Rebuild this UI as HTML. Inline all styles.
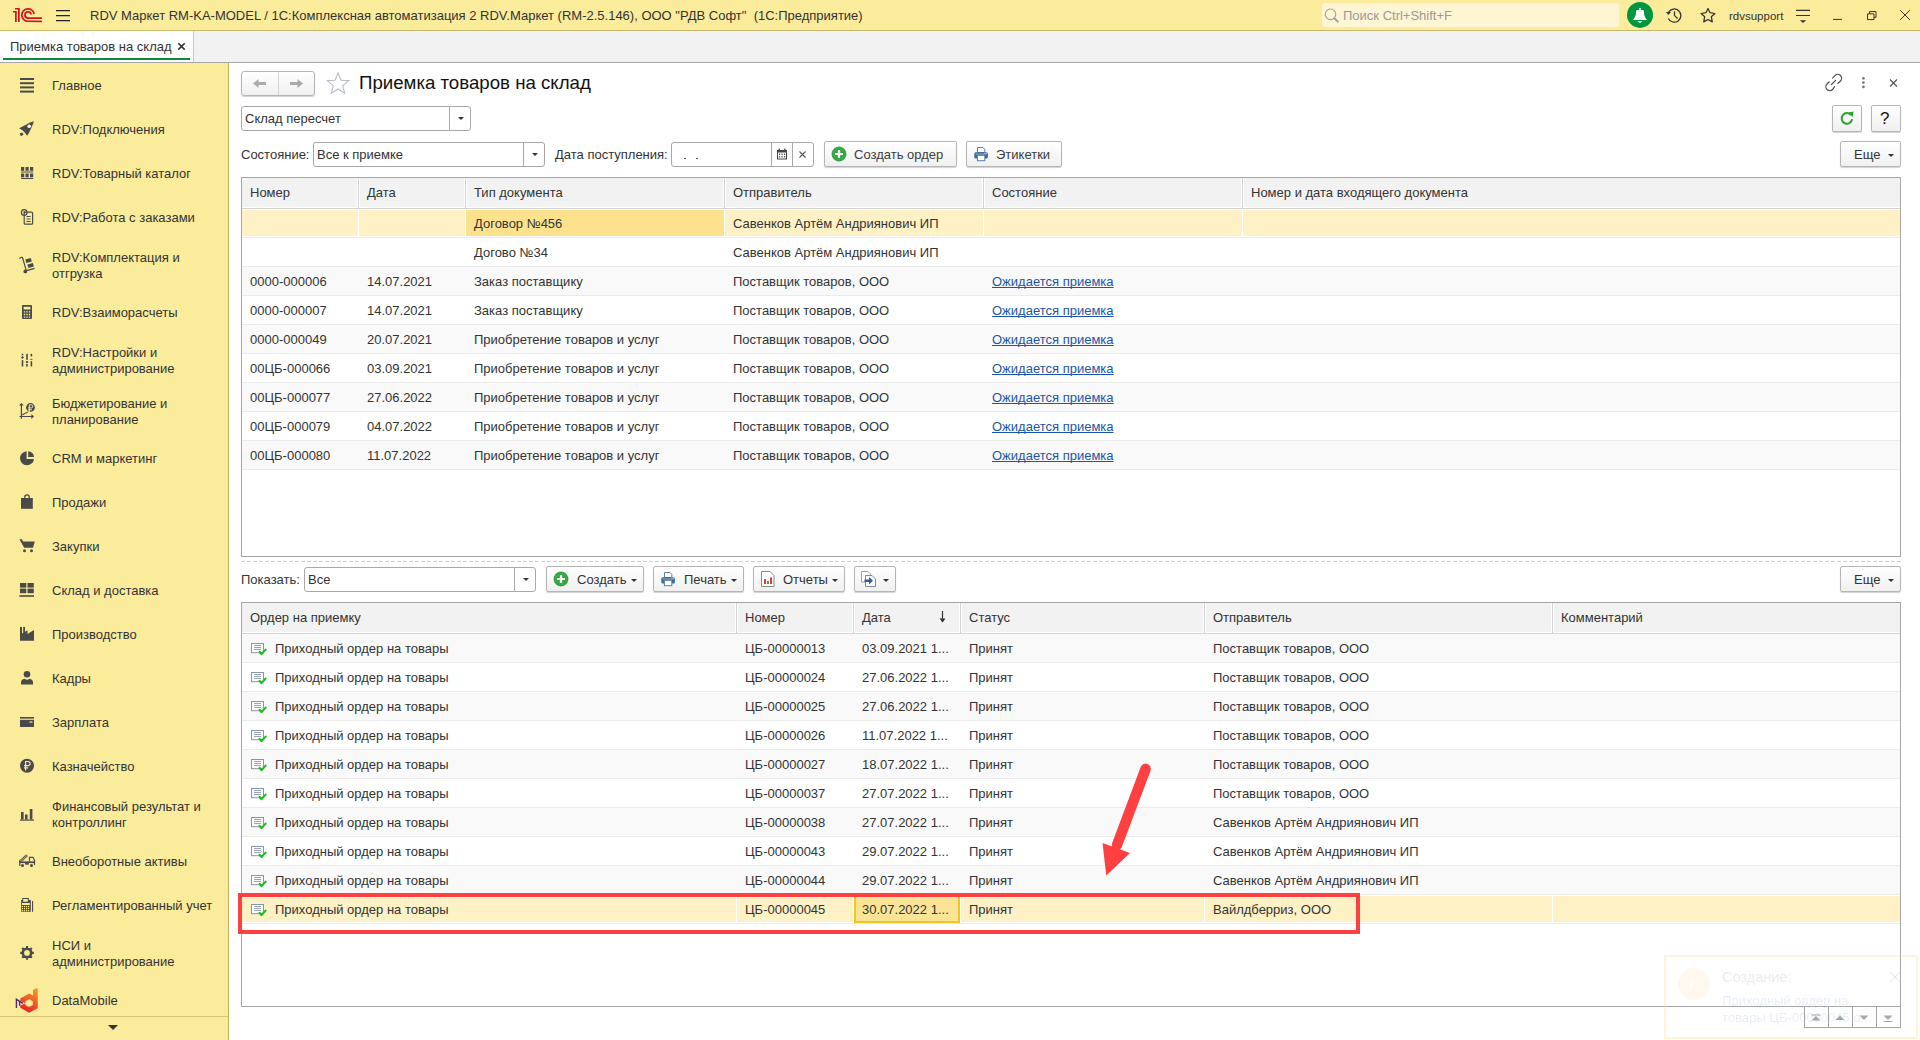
<!DOCTYPE html>
<html><head><meta charset="utf-8">
<style>
*{box-sizing:border-box;margin:0;padding:0}
html,body{width:1920px;height:1040px;overflow:hidden;background:#fff}
body{position:relative;font-family:"Liberation Sans",sans-serif;font-size:13px;color:#333}
.a{position:absolute}
.t{position:absolute;white-space:nowrap;line-height:16px}
#tb{left:0;top:0;width:1920px;height:31px;background:#fbec9c;border-bottom:1px solid #c9b96e}
#tabs{left:0;top:31px;width:1920px;height:32px;background:#f2f2f2;border-bottom:1px solid #a6a6a6}
#side{left:0;top:63px;width:229px;height:977px;background:#fbec9c;border-right:1px solid #bfae62}
.si{position:absolute;left:52px;line-height:16px;color:#333;white-space:nowrap}
.ic{position:absolute;left:19px}
.btn{position:absolute;border:1px solid #b5b5b5;border-radius:2px;background:linear-gradient(#fff,#f0f0f0);box-shadow:0 1px 1px rgba(0,0,0,.18)}
.inp{position:absolute;border:1px solid #a8a8a8;border-radius:3px;background:#fff}
.grid{position:absolute;border:1px solid #a0a0a0;background:#fff;overflow:hidden}
.hd{position:absolute;left:0;top:0;height:31px;background:#f2f2f2;border-bottom:1px solid #d6d6d6}
.row{position:absolute;left:0;height:29px;border-bottom:1px solid #e8e8e8}
.alt{background:#f9f9f9}
.cell{position:absolute;top:0;height:28px;line-height:28px;white-space:nowrap;overflow:hidden;color:#333}
.lnk{color:#2d5fa8;text-decoration:underline}
</style></head>
<body>
<!-- TITLE BAR -->
<div id="tb" class="a">
  <svg class="a" style="left:0;top:0" width="1920" height="31" viewBox="0 0 1920 31">
<g fill="#d7141e">
<path d="M18 8 H19.75 V22 H18 Z M15 8 H19.75 V9.6 H15 Z M15 11 H16.75 V22 H15 Z M13 11 H16.75 V12.6 H13 Z"/>
</g>
<g fill="none" stroke="#d7141e" stroke-width="1.75">
<path d="M34.15 14.1 A6.2 6.2 0 1 0 28 21.25 H41.9"/>
<path d="M31.1 14.5 A3.1 3.1 0 1 0 28 18.1 H41.9"/>
</g>
<g fill="none" stroke="#333" stroke-width="1.25">
<path d="M1668.3 18.4 A6.6 6.6 0 1 0 1668.6 12.2"/>
<path d="M1674.5 11.2 V15.6 L1677.6 18.5"/>
<path d="M1708 8.6 L1709.9 12.6 L1714.9 13.5 L1711.3 16.7 L1712.3 21.9 L1708 19.5 L1703.7 21.9 L1704.7 16.7 L1701.1 13.5 L1706.1 12.6 Z" stroke-linejoin="round"/>
<path d="M1796 10.4 H1810 M1796 15.5 H1810" stroke-width="1.1"/>
<path d="M1833 19.4 H1842" stroke-width="1"/>
<path d="M1867.5 13.8 H1874 V19.6 H1867.5 Z M1869.6 13.8 V11.5 H1876 V17.3 H1874" stroke-width="1"/>
<path d="M1900.2 10.2 L1909.9 19.9 M1909.9 10.2 L1900.2 19.9" stroke-width="1"/>
</g>
<path d="M1666 12.1 H1670.9 L1668.4 14.9 Z" fill="#333"/>
<path d="M1799.9 20.2 H1806.1 L1803 22.9 Z" fill="#333"/>
<circle cx="1640" cy="14.9" r="13" fill="#00963f"/>
<path d="M1639.2 7.9 H1640.8 V10.1 H1643 C1643.8 10.3 1643.9 11 1644 12.5 C1644.2 15.5 1644.6 17 1647.1 19.9 H1632.9 C1635.4 17 1635.8 15.5 1636 12.5 C1636.1 11 1636.2 10.3 1637 10.1 H1639.2 Z" fill="#fff"/>
<path d="M1637 21.3 H1642.9 L1640 22.9 Z" fill="#fff"/>
</svg>
  <div class="a" style="left:56px;top:10px;width:14px;height:1px;background:#222;box-shadow:0 0.5px 0 rgba(34,34,34,.5)"></div>
  <div class="a" style="left:56px;top:15px;width:14px;height:1px;background:#222;box-shadow:0 0.5px 0 rgba(34,34,34,.5)"></div>
  <div class="a" style="left:56px;top:20px;width:14px;height:1px;background:#222;box-shadow:0 0.5px 0 rgba(34,34,34,.5)"></div>
  <div class="t" style="left:90px;top:8px;color:#333">RDV Маркет RM-KA-MODEL / 1С:Комплексная автоматизация 2 RDV.Маркет (RM-2.5.146), ООО "РДВ Софт"&nbsp; (1С:Предприятие)</div>
  <div class="a" style="left:1322px;top:3px;width:297px;height:24px;background:#fdf5d3;border-radius:3px"></div>
  <div class="t" style="left:1343px;top:8px;color:#9a9a9a">Поиск Ctrl+Shift+F</div>
  <svg class="a" style="left:1322px;top:7px" width="20" height="18" viewBox="0 0 20 18"><circle cx="8.5" cy="7.3" r="5.3" fill="none" stroke="#a0a0a0" stroke-width="1.1"/><path d="M12.3 11.2 L15.8 14.6" stroke="#a0a0a0" stroke-width="2" stroke-linecap="round"/></svg>
  
  <div class="t" style="left:1729px;top:8px;font-size:11.5px;color:#333">rdvsupport</div>
</div>
<!-- TAB BAR -->
<div id="tabs" class="a">
  <div class="a" style="left:0;top:0;width:194px;height:31px;background:#fff;border-right:1px solid #c8c8c8"></div>
  <div class="t" style="left:10px;top:8px;color:#333">Приемка товаров на склад</div>
  <div class="a" style="left:3px;top:27px;width:187px;height:2px;background:#0a8a3a"></div>
  <svg class="a" style="left:176px;top:9px" width="12" height="12" viewBox="0 0 12 12"><path d="M2.3 3.2 L8.7 9.6 M8.7 3.2 L2.3 9.6" stroke="#333" stroke-width="1.6"/></svg>
</div>
<!-- SIDEBAR -->

<div id="side" class="a">
<div class="si" style="top:15px">Главное</div>
<div class="si" style="top:59px">RDV:Подключения</div>
<div class="si" style="top:103px">RDV:Товарный каталог</div>
<div class="si" style="top:147px">RDV:Работа с заказами</div>
<div class="si" style="top:187px">RDV:Комплектация и<br>отгрузка</div>
<div class="si" style="top:242px">RDV:Взаиморасчеты</div>
<div class="si" style="top:282px">RDV:Настройки и<br>администрирование</div>
<div class="si" style="top:333px">Бюджетирование и<br>планирование</div>
<div class="si" style="top:388px">CRM и маркетинг</div>
<div class="si" style="top:432px">Продажи</div>
<div class="si" style="top:476px">Закупки</div>
<div class="si" style="top:520px">Склад и доставка</div>
<div class="si" style="top:564px">Производство</div>
<div class="si" style="top:608px">Кадры</div>
<div class="si" style="top:652px">Зарплата</div>
<div class="si" style="top:696px">Казначейство</div>
<div class="si" style="top:736px">Финансовый результат и<br>контроллинг</div>
<div class="si" style="top:791px">Внеоборотные активы</div>
<div class="si" style="top:835px">Регламентированный учет</div>
<div class="si" style="top:875px">НСИ и<br>администрирование</div>
<div class="si" style="top:930px">DataMobile</div>
<div class="a" style="left:0;top:953px;width:228px;height:1px;background:#d6c57a"></div>
<div class="a" style="left:108px;top:962px;width:0;height:0;border-left:5px solid transparent;border-right:5px solid transparent;border-top:5px solid #333"></div>
</div>
<svg class="a" style="left:0;top:0" width="229" height="1040" viewBox="0 0 229 1040">
<g fill="#4a4a4a" stroke="none">
<!-- Главное -->
<rect x="20" y="78" width="14" height="2"/><rect x="20" y="82.2" width="14" height="2"/><rect x="20" y="86.4" width="14" height="2"/><rect x="20" y="90.6" width="14" height="2"/>
<!-- Rocket -->
<path d="M33.9 121.2 L30 122.5 L26 124.8 L19.1 128.2 L22.5 130.2 L24.5 132.3 L27.2 135.7 L29.2 132.5 L31 128.5 L32.8 124.5 Z"/>
<path d="M19.6 133.5 L22.2 132.4 L23.6 134.6 L21 136.2 Z"/>
<circle cx="29.2" cy="126.3" r="1.8" fill="#fff"/>
<!-- Grid catalog -->
<rect x="21" y="167" width="3.2" height="3.8"/><rect x="25.5" y="167" width="3.2" height="3.8"/><rect x="30" y="167" width="3.2" height="3.8"/>
<rect x="21" y="171.5" width="12.2" height="1"/>
<rect x="21" y="173.5" width="3.2" height="3.8"/><rect x="25.5" y="173.5" width="3.2" height="3.8"/><rect x="30" y="173.5" width="3.2" height="3.8"/>
<rect x="21" y="178" width="12.2" height="1"/>
</g>
<g fill="none" stroke="#4a4a4a" stroke-width="1.2">
<!-- Orders clipboard -->
<circle cx="24.2" cy="212.5" r="2.8"/>
<path d="M24.2 211 V212.7 H25.5"/>
<rect x="24.2" y="212.2" width="8.4" height="12" rx="1"/>
<path d="M26.5 216.5 H30.5 M26.5 219 H30.5 M26.5 221.5 H30.5"/>
<!-- Hand truck -->
<path d="M19.2 258.6 L21.3 257.3 L22.5 257.5 L26.4 270.8"/>
<circle cx="25.3" cy="271.4" r="1.3" fill="#4a4a4a"/>
<path d="M26.5 270.6 L34.6 268.3" stroke-width="1.3"/>
</g>
<g fill="#4a4a4a">
<path d="M25.3 259.4 L30.7 257.9 L31.8 261.6 L26.4 263.1 Z"/>
<path d="M27.4 264.4 L32.9 262.9 L33.9 266.6 L28.4 268.1 Z"/>
<!-- Calculator -->
<path fill-rule="evenodd" d="M23 305 h8 a1 1 0 0 1 1 1 v12 a1 1 0 0 1 -1 1 h-8 a1 1 0 0 1 -1 -1 v-12 a1 1 0 0 1 1 -1 Z M23.6 306.8 h6.8 v2.8 h-6.8 Z M23.8 311.2 h1.4 v1.4 h-1.4Z M26.3 311.2 h1.4 v1.4 h-1.4Z M28.8 311.2 h1.4 v1.4 h-1.4Z M23.8 313.8 h1.4 v1.4 h-1.4Z M26.3 313.8 h1.4 v1.4 h-1.4Z M28.8 313.8 h1.4 v1.4 h-1.4Z M23.8 316.4 h1.4 v1.4 h-1.4Z M26.3 316.4 h1.4 v1.4 h-1.4Z M28.8 316.4 h1.4 v1.4 h-1.4Z"/>
<!-- Sliders -->
<rect x="21.7" y="353.8" width="1.6" height="1.6"/><path d="M22.5 356 L24 357.5 L22.5 359 L21 357.5 Z"/><rect x="21.7" y="360" width="1.6" height="6.6" rx="0.7"/>
<rect x="26.2" y="353.8" width="1.6" height="6" /><rect x="25.8" y="361" width="2.4" height="2" rx="0.8"/><rect x="26.2" y="363.8" width="1.6" height="2.8"/>
<rect x="30.6" y="353.8" width="1.6" height="2.7" rx="0.6"/><path d="M29.9 359.8 Q31.4 357.6 32.9 359.8 Z"/><rect x="30.6" y="361" width="1.6" height="5.6" rx="0.7"/>
</g>
<g fill="none" stroke="#4a4a4a" stroke-width="1.2">
<!-- Budget axes -->
<path d="M21.4 405 V418.8 M19.5 416.5 H32"/>
<path d="M22 414.6 H23.5 V413.8 H25 V413 H26.5 V412.3 H28" stroke-width="1"/>
</g>
<g fill="#4a4a4a">
<path d="M19 405.6 L21.4 403 L23.8 405.6 Z"/>
<path d="M31.3 414.1 L34 416.5 L31.3 418.9 Z"/>
<circle cx="30.5" cy="407.5" r="4.4"/>
</g>
<g fill="none" stroke="#fbec9c" stroke-width="1"><path d="M29.3 412 V404.8 H31.3 A1.5 1.5 0 0 1 31.3 407.9 H28 M28 409.8 H32"/></g>
<g fill="#4a4a4a">
<!-- Pie -->
<path d="M26.6 451.3 A7 7 0 1 0 34 459 H26.6 Z"/>
<path d="M28.2 451.2 A5.8 5.8 0 0 1 34 457 H28.2 Z"/>
<!-- Bag -->
<rect x="21" y="498" width="11.8" height="10.8"/>
</g>
<path d="M24.8 500 V497 A2.2 2.2 0 0 1 29.2 497 V500" fill="none" stroke="#4a4a4a" stroke-width="1.3"/>
<g fill="#4a4a4a">
<!-- Cart -->
<path d="M19.4 539.2 H22 L23 541.5 H34.8 L33 547.8 H24.2 Z"/>
<circle cx="24.5" cy="550.8" r="1.5"/><circle cx="31.5" cy="550.8" r="1.5"/>
<!-- Warehouse -->
<rect x="20" y="583" width="6.3" height="4.6"/><rect x="27.5" y="583" width="6.3" height="4.6"/>
<rect x="20" y="588.6" width="6.3" height="4.6"/><rect x="27.5" y="588.6" width="6.3" height="4.6"/>
<rect x="19.4" y="595.2" width="14.6" height="1.6"/>
<!-- Factory -->
<path d="M20 640.8 V632 L20 627 H22 V633.5 L23.2 632.8 V627 H25 V631.8 L27.5 630.3 V634 L34 630 V640.8 Z"/>
<!-- Person -->
<circle cx="27" cy="674.3" r="3.3"/>
<path d="M21 684.6 V682.5 Q21 679.5 24.5 678.8 Q27 680.5 29.5 678.8 Q33 679.5 33 682.5 V684.6 Z"/>
<!-- Card -->
<rect x="20" y="717" width="14" height="1.6"/>
<path d="M20 719.8 H34 V727 H20 Z"/>
</g>
<rect x="29.5" y="721.5" width="3" height="1.2" fill="#fbec9c"/>
<g fill="#4a4a4a">
<!-- Ruble coin -->
<circle cx="27" cy="765.7" r="7"/>
</g>
<g fill="none" stroke="#fbec9c" stroke-width="1.2"><path d="M25.6 770.5 V761.5 H28 A2.1 2.1 0 0 1 28 765.7 H24 M24 767.8 H28.2"/></g>
<g fill="#4a4a4a">
<!-- Bar chart -->
<rect x="21" y="812" width="2.6" height="7.5"/><rect x="25" y="814.5" width="2.6" height="5"/><rect x="29.8" y="809" width="2.6" height="10.5"/>
<rect x="20" y="819.5" width="14" height="1.2"/>
<!-- Truck -->
<rect x="19.3" y="861.4" width="15.7" height="1.7"/>
<rect x="19.2" y="861" width="1.2" height="5"/><rect x="33.9" y="860" width="1.2" height="5"/>
<rect x="25.2" y="863" width="3.6" height="1.7"/>
<circle cx="22.5" cy="865.5" r="1.5"/><circle cx="31.5" cy="865.5" r="1.5"/>
</g>
<path d="M29.4 861.5 V857.4 H33 L34.5 860.2 V862" stroke="#4a4a4a" stroke-width="1.1" fill="none"/>
<path d="M20 861.6 L27.3 855" stroke="#4a4a4a" stroke-width="2.8" fill="none" stroke-dasharray="1.1 0.5"/>
<g fill="#4a4a4a">
<!-- Regl calculator -->
<path fill-rule="evenodd" d="M21.2 900 H22.2 V898 H28.8 V900 H30.8 V911.8 H21.2 Z M23.2 899 H27.8 V901.8 H23.2 Z M22 902.9 H29.8 V905 H22 Z M21.950000000000003 906.5 a0.65 0.65 0 1 0 1.3 0 a0.65 0.65 0 1 0 -1.3 0Z M23.950000000000003 906.5 a0.65 0.65 0 1 0 1.3 0 a0.65 0.65 0 1 0 -1.3 0Z M25.950000000000003 906.5 a0.65 0.65 0 1 0 1.3 0 a0.65 0.65 0 1 0 -1.3 0Z M27.950000000000003 906.5 a0.65 0.65 0 1 0 1.3 0 a0.65 0.65 0 1 0 -1.3 0Z M21.950000000000003 908.5 a0.65 0.65 0 1 0 1.3 0 a0.65 0.65 0 1 0 -1.3 0Z M23.950000000000003 908.5 a0.65 0.65 0 1 0 1.3 0 a0.65 0.65 0 1 0 -1.3 0Z M25.950000000000003 908.5 a0.65 0.65 0 1 0 1.3 0 a0.65 0.65 0 1 0 -1.3 0Z M27.950000000000003 908.5 a0.65 0.65 0 1 0 1.3 0 a0.65 0.65 0 1 0 -1.3 0Z M21.950000000000003 910.5 a0.65 0.65 0 1 0 1.3 0 a0.65 0.65 0 1 0 -1.3 0Z M23.950000000000003 910.5 a0.65 0.65 0 1 0 1.3 0 a0.65 0.65 0 1 0 -1.3 0Z M25.950000000000003 910.5 a0.65 0.65 0 1 0 1.3 0 a0.65 0.65 0 1 0 -1.3 0Z M27.950000000000003 910.5 a0.65 0.65 0 1 0 1.3 0 a0.65 0.65 0 1 0 -1.3 0Z"/>
<rect x="32" y="901" width="1.1" height="10.8"/>
</g>
<g fill="#4a4a4a">
<!-- Gear -->
<path d="M32.5 952.9 A5.5 5.5 0 1 0 21.5 952.9 A5.5 5.5 0 1 0 32.5 952.9 Z M31.00 953.95 L33.80 953.95 L33.80 951.85 L31.00 951.85 Z M29.09 956.47 L31.07 958.45 L32.55 956.97 L30.57 954.99 Z M25.95 956.90 L25.95 959.70 L28.05 959.70 L28.05 956.90 Z M23.43 954.99 L21.45 956.97 L22.93 958.45 L24.91 956.47 Z M23.00 951.85 L20.20 951.85 L20.20 953.95 L23.00 953.95 Z M24.91 949.33 L22.93 947.35 L21.45 948.83 L23.43 950.81 Z M28.05 948.90 L28.05 946.10 L25.95 946.10 L25.95 948.90 Z M30.57 950.81 L32.55 948.83 L31.07 947.35 L29.09 949.33 Z"/>
</g>
<circle cx="27" cy="952.9" r="2.9" fill="#fbec9c"/>
<!-- DataMobile -->
<defs><linearGradient id="dmg" x1="0.3" y1="1" x2="0.7" y2="0"><stop offset="0" stop-color="#e61f2a"/><stop offset="1" stop-color="#f59624"/></linearGradient></defs>
<path fill="url(#dmg)" fill-rule="evenodd" d="M36.3 988 L37.8 988.8 V1008.2 L29.2 1012.8 L20.3 1007.8 V1005.6 L25.4 1003.3 L20.3 1001 V998.4 L29.2 993.6 L33 995.6 V990 Z M29.2 999.3 L32.8 1001.3 V1005.1 L29.2 1007.1 L25.4 1005.1 V1001.3 Z"/>
<path d="M16.4 1008 V999.3 L22.8 1003.3 M19.6 1001.5 V1005.8" stroke="#4b2a7a" stroke-width="1.4" fill="none"/>
</svg>
<!-- MAIN -->
<div id="main">
<div class="btn" style="left:241px;top:71px;width:74px;height:25px;border-radius:3px"></div>
<div class="a" style="left:278px;top:72px;width:1px;height:23px;background:#d4d4d4"></div>
<svg class="a" style="left:241px;top:71px" width="74" height="25" viewBox="0 0 74 25">
<g fill="#ababab"><path d="M12 12.5 L17.5 8 V11 H25 V14 H17.5 V17 Z"/><path d="M62 12.5 L56.5 8 V11 H49 V14 H56.5 V17 Z"/></g></svg>
<svg class="a" style="left:325px;top:71px" width="26" height="25" viewBox="0 0 26 25">
<path d="M13 1.8 L15.9 9.2 L23.8 9.6 L17.7 14.6 L19.8 22.3 L13 18 L6.2 22.3 L8.3 14.6 L2.2 9.6 L10.1 9.2 Z" fill="none" stroke="#b9bdc5" stroke-width="1.1" stroke-linejoin="miter"/></svg>
<div class="t" style="left:359px;top:72px;font-size:18.67px;line-height:22px;color:#111">Приемка товаров на склад</div>
<svg class="a" style="left:1824px;top:73px" width="80" height="20" viewBox="0 0 80 20">
<g fill="none" stroke="#4d4d4d" stroke-width="1.2">
<path d="M8.3 5.3 L11 2.6 A3.85 3.85 0 0 1 16.5 8 L13.5 10.8"/>
<path d="M5.5 8.5 L3 11 A3.85 3.85 0 0 0 8.5 16.5 L10.8 13.3"/>
<path d="M7.5 11.5 L11.6 7.3" stroke-linecap="round"/>
<path d="M66 6.5 L73 13.5 M73 6.5 L66 13.5" stroke="#555"/>
</g>
<g fill="#777"><circle cx="39.4" cy="5.3" r="1.35"/><circle cx="39.4" cy="9.6" r="1.35"/><circle cx="39.4" cy="13.9" r="1.35"/></g>
</svg>
<div class="inp" style="left:241px;top:106px;width:230px;height:25px"></div>
<div class="a" style="left:449px;top:106px;width:1px;height:25px;background:#a8a8a8"></div>
<svg class="a" style="left:457.5px;top:117.0px" width="6" height="3" viewBox="0 0 6 3"><path d="M0 0 H6 L3 3 Z" fill="#333"/></svg>
<div class="t" style="left:245px;top:110.5px;color:#333;font-size:13px;">Склад пересчет</div>
<div class="btn" style="left:1832px;top:105px;width:30px;height:27px"></div>
<div class="btn" style="left:1871px;top:105px;width:30px;height:27px"></div>
<svg class="a" style="left:1837px;top:108px" width="20" height="20" viewBox="0 0 20 20">
<path d="M14.2 7.2 A5.3 5.3 0 1 0 15.2 11.2" fill="none" stroke="#2aa32a" stroke-width="2"/>
<path d="M11.2 4.6 L16.6 3.6 L15.6 9 Z" fill="#2aa32a"/></svg>
<div class="t" style="left:1880px;top:110px;font-size:17px;line-height:17px;color:#111">?</div>
<div class="t" style="left:241px;top:146.5px;color:#333;font-size:13px;">Состояние:</div>
<div class="inp" style="left:313px;top:142px;width:232px;height:25px"></div>
<div class="a" style="left:523px;top:142px;width:1px;height:25px;background:#a8a8a8"></div>
<svg class="a" style="left:531.5px;top:153.0px" width="6" height="3" viewBox="0 0 6 3"><path d="M0 0 H6 L3 3 Z" fill="#333"/></svg>
<div class="t" style="left:317px;top:146.5px;color:#333;font-size:13px;">Все к приемке</div>
<div class="t" style="left:555px;top:146.5px;color:#333;font-size:13px;">Дата поступления:</div>
<div class="inp" style="left:671px;top:142px;width:143px;height:25px"></div>
<div class="a" style="left:771px;top:142px;width:1px;height:25px;background:#a8a8a8"></div>
<div class="a" style="left:792px;top:142px;width:1px;height:25px;background:#a8a8a8"></div>
<div class="a" style="left:684px;top:158px;width:2px;height:1px;background:#555"></div>
<div class="a" style="left:696px;top:158px;width:2px;height:1px;background:#555"></div>
<svg class="a" style="left:776px;top:148px" width="12" height="12" viewBox="0 0 12 12">
<path fill="#444" fill-rule="evenodd" d="M1 2 h10 v9.5 h-10 Z M2 4.6 h8 v6 h-8 Z"/>
<rect x="2.5" y="0.6" width="1.4" height="2.4" fill="#444"/><rect x="8.1" y="0.6" width="1.4" height="2.4" fill="#444"/>
<g fill="#444"><rect x="2.9" y="5.6" width="1.3" height="1.3"/><rect x="5.4" y="5.6" width="1.3" height="1.3"/><rect x="7.9" y="5.6" width="1.3" height="1.3"/>
<rect x="2.9" y="8.1" width="1.3" height="1.3"/><rect x="5.4" y="8.1" width="1.3" height="1.3"/><rect x="7.9" y="8.1" width="1.3" height="1.3"/></g></svg>
<svg class="a" style="left:797px;top:149px" width="11" height="11" viewBox="0 0 11 11"><path d="M2.5 2.5 L8.5 8.5 M8.5 2.5 L2.5 8.5" stroke="#555" stroke-width="1.1"/></svg>
<div class="btn" style="left:824px;top:141px;width:133px;height:26px"></div>
<svg class="a" style="left:831px;top:146px" width="16" height="16" viewBox="0 0 16 16">
<circle cx="8" cy="8" r="7" fill="#33aa44" stroke="#1f8f2f" stroke-width="0.8"/>
<path d="M8 4 V12 M4 8 H12" stroke="#fff" stroke-width="2.2"/></svg>
<div class="t" style="left:854px;top:146.5px;color:#3d3d3d;font-size:13px;">Создать ордер</div>
<div class="btn" style="left:966px;top:141px;width:96px;height:26px"></div>
<svg class="a" style="left:974px;top:147px" width="15" height="15" viewBox="0 0 15 15">
<path d="M3.5 0.5 H9 L10.8 2.3 V5.5 H3.5 Z" fill="#fff" stroke="#5b7fa6" stroke-width="1"/>
<rect x="0.3" y="5.2" width="13.6" height="6.4" rx="1.6" fill="#3d6996"/>
<rect x="1.6" y="6.6" width="11" height="0.9" fill="#9db8d3"/>
<rect x="10.4" y="5.9" width="1.1" height="0.6" fill="#fff"/><rect x="11.9" y="5.9" width="1.1" height="0.6" fill="#fff"/>
<rect x="3.4" y="8.3" width="7.4" height="5.4" fill="#fff" stroke="#5b7fa6" stroke-width="1"/>
</svg>
<div class="t" style="left:996px;top:146.5px;color:#3d3d3d;font-size:13px;">Этикетки</div>
<div class="btn" style="left:1840px;top:141px;width:61px;height:26px"></div>
<div class="t" style="left:1854px;top:146.5px;color:#333;font-size:13px;">Еще</div>
<svg class="a" style="left:1888px;top:153.5px" width="6" height="3" viewBox="0 0 6 3"><path d="M0 0 H6 L3 3 Z" fill="#333"/></svg>
<div class="a" style="left:241px;top:177px;width:1660px;height:380px;border:1px solid #a6a6a6;background:#fff"></div>
<div class="a" style="left:242px;top:178px;width:1658px;height:29px;background:#f2f2f2"></div>
<div class="a" style="left:242px;top:208px;width:1658px;height:1px;background:#d4d4d4"></div>
<div class="a" style="left:358px;top:178px;width:1px;height:30px;background:#d4d4d4"></div>
<div class="a" style="left:357px;top:178px;width:1px;height:30px;background:#fff"></div>
<div class="a" style="left:359px;top:178px;width:1px;height:30px;background:#fff"></div>
<div class="a" style="left:465px;top:178px;width:1px;height:30px;background:#d4d4d4"></div>
<div class="a" style="left:464px;top:178px;width:1px;height:30px;background:#fff"></div>
<div class="a" style="left:466px;top:178px;width:1px;height:30px;background:#fff"></div>
<div class="a" style="left:724px;top:178px;width:1px;height:30px;background:#d4d4d4"></div>
<div class="a" style="left:723px;top:178px;width:1px;height:30px;background:#fff"></div>
<div class="a" style="left:725px;top:178px;width:1px;height:30px;background:#fff"></div>
<div class="a" style="left:983px;top:178px;width:1px;height:30px;background:#d4d4d4"></div>
<div class="a" style="left:982px;top:178px;width:1px;height:30px;background:#fff"></div>
<div class="a" style="left:984px;top:178px;width:1px;height:30px;background:#fff"></div>
<div class="a" style="left:1242px;top:178px;width:1px;height:30px;background:#d4d4d4"></div>
<div class="a" style="left:1241px;top:178px;width:1px;height:30px;background:#fff"></div>
<div class="a" style="left:1243px;top:178px;width:1px;height:30px;background:#fff"></div>
<div class="t" style="left:250px;top:185.0px;color:#333;font-size:13px;">Номер</div>
<div class="t" style="left:367px;top:185.0px;color:#333;font-size:13px;">Дата</div>
<div class="t" style="left:474px;top:185.0px;color:#333;font-size:13px;">Тип документа</div>
<div class="t" style="left:733px;top:185.0px;color:#333;font-size:13px;">Отправитель</div>
<div class="t" style="left:992px;top:185.0px;color:#333;font-size:13px;">Состояние</div>
<div class="t" style="left:1251px;top:185.0px;color:#333;font-size:13px;">Номер и дата входящего документа</div>
<div class="a" style="left:242px;top:209px;width:1658px;height:28px;background:#fdf1c5"></div>
<div class="a" style="left:242px;top:237px;width:1658px;height:1px;background:#ebebeb"></div>
<div class="a" style="left:242px;top:236px;width:1658px;height:1px;background:#fff"></div>
<div class="a" style="left:242px;top:209px;width:1658px;height:1px;background:#fff"></div>
<div class="a" style="left:358px;top:209px;width:1px;height:28px;background:#fff"></div>
<div class="a" style="left:465px;top:209px;width:1px;height:28px;background:#fff"></div>
<div class="a" style="left:724px;top:209px;width:1px;height:28px;background:#fff"></div>
<div class="a" style="left:983px;top:209px;width:1px;height:28px;background:#fff"></div>
<div class="a" style="left:1242px;top:209px;width:1px;height:28px;background:#fff"></div>
<div class="a" style="left:466px;top:210px;width:258px;height:26px;background:#fde28e"></div>
<div class="t" style="left:474px;top:215.5px;color:#333;font-size:13px;">Договор №456</div>
<div class="t" style="left:733px;top:215.5px;color:#333;font-size:13px;">Савенков Артём Андриянович ИП</div>
<div class="a" style="left:242px;top:238px;width:1658px;height:28px;background:#fff"></div>
<div class="a" style="left:242px;top:266px;width:1658px;height:1px;background:#ebebeb"></div>
<div class="t" style="left:474px;top:244.5px;color:#333;font-size:13px;">Догово №34</div>
<div class="t" style="left:733px;top:244.5px;color:#333;font-size:13px;">Савенков Артём Андриянович ИП</div>
<div class="a" style="left:242px;top:267px;width:1658px;height:28px;background:#f9f9f9"></div>
<div class="a" style="left:242px;top:295px;width:1658px;height:1px;background:#ebebeb"></div>
<div class="t" style="left:250px;top:273.5px;color:#333;font-size:13px;">0000-000006</div>
<div class="t" style="left:367px;top:273.5px;color:#333;font-size:13px;">14.07.2021</div>
<div class="t" style="left:474px;top:273.5px;color:#333;font-size:13px;">Заказ поставщику</div>
<div class="t" style="left:733px;top:273.5px;color:#333;font-size:13px;">Поставщик товаров, ООО</div>
<div class="t" style="left:992px;top:273.5px;color:#1c56a8;font-size:13px;text-decoration:underline;text-decoration-skip-ink:none">Ожидается приемка</div>
<div class="a" style="left:242px;top:296px;width:1658px;height:28px;background:#fff"></div>
<div class="a" style="left:242px;top:324px;width:1658px;height:1px;background:#ebebeb"></div>
<div class="t" style="left:250px;top:302.5px;color:#333;font-size:13px;">0000-000007</div>
<div class="t" style="left:367px;top:302.5px;color:#333;font-size:13px;">14.07.2021</div>
<div class="t" style="left:474px;top:302.5px;color:#333;font-size:13px;">Заказ поставщику</div>
<div class="t" style="left:733px;top:302.5px;color:#333;font-size:13px;">Поставщик товаров, ООО</div>
<div class="t" style="left:992px;top:302.5px;color:#1c56a8;font-size:13px;text-decoration:underline;text-decoration-skip-ink:none">Ожидается приемка</div>
<div class="a" style="left:242px;top:325px;width:1658px;height:28px;background:#f9f9f9"></div>
<div class="a" style="left:242px;top:353px;width:1658px;height:1px;background:#ebebeb"></div>
<div class="t" style="left:250px;top:331.5px;color:#333;font-size:13px;">0000-000049</div>
<div class="t" style="left:367px;top:331.5px;color:#333;font-size:13px;">20.07.2021</div>
<div class="t" style="left:474px;top:331.5px;color:#333;font-size:13px;">Приобретение товаров и услуг</div>
<div class="t" style="left:733px;top:331.5px;color:#333;font-size:13px;">Поставщик товаров, ООО</div>
<div class="t" style="left:992px;top:331.5px;color:#1c56a8;font-size:13px;text-decoration:underline;text-decoration-skip-ink:none">Ожидается приемка</div>
<div class="a" style="left:242px;top:354px;width:1658px;height:28px;background:#fff"></div>
<div class="a" style="left:242px;top:382px;width:1658px;height:1px;background:#ebebeb"></div>
<div class="t" style="left:250px;top:360.5px;color:#333;font-size:13px;">00ЦБ-000066</div>
<div class="t" style="left:367px;top:360.5px;color:#333;font-size:13px;">03.09.2021</div>
<div class="t" style="left:474px;top:360.5px;color:#333;font-size:13px;">Приобретение товаров и услуг</div>
<div class="t" style="left:733px;top:360.5px;color:#333;font-size:13px;">Поставщик товаров, ООО</div>
<div class="t" style="left:992px;top:360.5px;color:#1c56a8;font-size:13px;text-decoration:underline;text-decoration-skip-ink:none">Ожидается приемка</div>
<div class="a" style="left:242px;top:383px;width:1658px;height:28px;background:#f9f9f9"></div>
<div class="a" style="left:242px;top:411px;width:1658px;height:1px;background:#ebebeb"></div>
<div class="t" style="left:250px;top:389.5px;color:#333;font-size:13px;">00ЦБ-000077</div>
<div class="t" style="left:367px;top:389.5px;color:#333;font-size:13px;">27.06.2022</div>
<div class="t" style="left:474px;top:389.5px;color:#333;font-size:13px;">Приобретение товаров и услуг</div>
<div class="t" style="left:733px;top:389.5px;color:#333;font-size:13px;">Поставщик товаров, ООО</div>
<div class="t" style="left:992px;top:389.5px;color:#1c56a8;font-size:13px;text-decoration:underline;text-decoration-skip-ink:none">Ожидается приемка</div>
<div class="a" style="left:242px;top:412px;width:1658px;height:28px;background:#fff"></div>
<div class="a" style="left:242px;top:440px;width:1658px;height:1px;background:#ebebeb"></div>
<div class="t" style="left:250px;top:418.5px;color:#333;font-size:13px;">00ЦБ-000079</div>
<div class="t" style="left:367px;top:418.5px;color:#333;font-size:13px;">04.07.2022</div>
<div class="t" style="left:474px;top:418.5px;color:#333;font-size:13px;">Приобретение товаров и услуг</div>
<div class="t" style="left:733px;top:418.5px;color:#333;font-size:13px;">Поставщик товаров, ООО</div>
<div class="t" style="left:992px;top:418.5px;color:#1c56a8;font-size:13px;text-decoration:underline;text-decoration-skip-ink:none">Ожидается приемка</div>
<div class="a" style="left:242px;top:441px;width:1658px;height:28px;background:#f9f9f9"></div>
<div class="a" style="left:242px;top:469px;width:1658px;height:1px;background:#ebebeb"></div>
<div class="t" style="left:250px;top:447.5px;color:#333;font-size:13px;">00ЦБ-000080</div>
<div class="t" style="left:367px;top:447.5px;color:#333;font-size:13px;">11.07.2022</div>
<div class="t" style="left:474px;top:447.5px;color:#333;font-size:13px;">Приобретение товаров и услуг</div>
<div class="t" style="left:733px;top:447.5px;color:#333;font-size:13px;">Поставщик товаров, ООО</div>
<div class="t" style="left:992px;top:447.5px;color:#1c56a8;font-size:13px;text-decoration:underline;text-decoration-skip-ink:none">Ожидается приемка</div>
<div class="a" style="left:241px;top:561px;width:1660px;height:1px;background:repeating-linear-gradient(90deg,#cfcfcf 0 4px,transparent 4px 6px)"></div>
<div class="t" style="left:241px;top:571.5px;color:#333;font-size:13px;">Показать:</div>
<div class="inp" style="left:304px;top:567px;width:232px;height:25px"></div>
<div class="a" style="left:514px;top:567px;width:1px;height:25px;background:#a8a8a8"></div>
<svg class="a" style="left:522.5px;top:578.0px" width="6" height="3" viewBox="0 0 6 3"><path d="M0 0 H6 L3 3 Z" fill="#333"/></svg>
<div class="t" style="left:308px;top:571.5px;color:#333;font-size:13px;">Все</div>
<div class="btn" style="left:546px;top:566px;width:98px;height:26px"></div>
<svg class="a" style="left:553px;top:571px" width="16" height="16" viewBox="0 0 16 16">
<circle cx="8" cy="8" r="7" fill="#33aa44" stroke="#1f8f2f" stroke-width="0.8"/>
<path d="M8 4 V12 M4 8 H12" stroke="#fff" stroke-width="2.2"/></svg>
<div class="t" style="left:577px;top:571.5px;color:#333;font-size:13px;">Создать</div>
<svg class="a" style="left:631px;top:578.5px" width="6" height="3" viewBox="0 0 6 3"><path d="M0 0 H6 L3 3 Z" fill="#333"/></svg>
<div class="btn" style="left:653px;top:566px;width:91px;height:26px"></div>
<svg class="a" style="left:661px;top:572px" width="15" height="15" viewBox="0 0 15 15">
<path d="M3.5 0.5 H9 L10.8 2.3 V5.5 H3.5 Z" fill="#fff" stroke="#5b7fa6" stroke-width="1"/>
<rect x="0.3" y="5.2" width="13.6" height="6.4" rx="1.6" fill="#3d6996"/>
<rect x="1.6" y="6.6" width="11" height="0.9" fill="#9db8d3"/>
<rect x="10.4" y="5.9" width="1.1" height="0.6" fill="#fff"/><rect x="11.9" y="5.9" width="1.1" height="0.6" fill="#fff"/>
<rect x="3.4" y="8.3" width="7.4" height="5.4" fill="#fff" stroke="#5b7fa6" stroke-width="1"/>
</svg>
<div class="t" style="left:684px;top:571.5px;color:#333;font-size:13px;">Печать</div>
<svg class="a" style="left:731px;top:578.5px" width="6" height="3" viewBox="0 0 6 3"><path d="M0 0 H6 L3 3 Z" fill="#333"/></svg>
<div class="btn" style="left:753px;top:566px;width:92px;height:26px"></div>
<svg class="a" style="left:761px;top:571px" width="14" height="16" viewBox="0 0 14 16">
<path d="M0.5 0.5 H9 L13 4.5 V15.5 H0.5 Z" fill="#fff" stroke="#8a8a8a" stroke-width="1"/>
<rect x="3" y="8" width="2" height="5" fill="#e53935"/><rect x="6" y="10" width="2" height="3" fill="#43a047"/><rect x="9" y="6.5" width="2" height="6.5" fill="#e53935"/>
</svg>
<div class="t" style="left:783px;top:571.5px;color:#333;font-size:13px;">Отчеты</div>
<svg class="a" style="left:832px;top:578.5px" width="6" height="3" viewBox="0 0 6 3"><path d="M0 0 H6 L3 3 Z" fill="#333"/></svg>
<div class="btn" style="left:854px;top:566px;width:42px;height:26px"></div>
<svg class="a" style="left:861px;top:571px" width="16" height="16" viewBox="0 0 16 16">
<path d="M0.5 0.5 H7 L9.5 3 V11 H0.5 Z" fill="#fff" stroke="#9aa3ad" stroke-width="1"/>
<path d="M4.5 4.5 H11 L14.5 8 V15.5 H4.5 Z" fill="#fff" stroke="#7d8b99" stroke-width="1"/>
<path d="M3.5 8.5 H8 V6 L12 9.8 L8 13.6 V11 H3.5 Z" fill="#2e5e9a"/>
</svg>
<svg class="a" style="left:883px;top:578.5px" width="6" height="3" viewBox="0 0 6 3"><path d="M0 0 H6 L3 3 Z" fill="#333"/></svg>
<div class="btn" style="left:1840px;top:566px;width:61px;height:26px"></div>
<div class="t" style="left:1854px;top:571.5px;color:#333;font-size:13px;">Еще</div>
<svg class="a" style="left:1888px;top:578.5px" width="6" height="3" viewBox="0 0 6 3"><path d="M0 0 H6 L3 3 Z" fill="#333"/></svg>
<div class="a" style="left:241px;top:602px;width:1660px;height:405px;border:1px solid #a6a6a6;background:#fff"></div>
<div class="a" style="left:242px;top:603px;width:1658px;height:29px;background:#f2f2f2"></div>
<div class="a" style="left:242px;top:633px;width:1658px;height:1px;background:#d4d4d4"></div>
<div class="a" style="left:736px;top:603px;width:1px;height:30px;background:#d4d4d4"></div>
<div class="a" style="left:735px;top:603px;width:1px;height:30px;background:#fff"></div>
<div class="a" style="left:737px;top:603px;width:1px;height:30px;background:#fff"></div>
<div class="a" style="left:853px;top:603px;width:1px;height:30px;background:#d4d4d4"></div>
<div class="a" style="left:852px;top:603px;width:1px;height:30px;background:#fff"></div>
<div class="a" style="left:854px;top:603px;width:1px;height:30px;background:#fff"></div>
<div class="a" style="left:960px;top:603px;width:1px;height:30px;background:#d4d4d4"></div>
<div class="a" style="left:959px;top:603px;width:1px;height:30px;background:#fff"></div>
<div class="a" style="left:961px;top:603px;width:1px;height:30px;background:#fff"></div>
<div class="a" style="left:1204px;top:603px;width:1px;height:30px;background:#d4d4d4"></div>
<div class="a" style="left:1203px;top:603px;width:1px;height:30px;background:#fff"></div>
<div class="a" style="left:1205px;top:603px;width:1px;height:30px;background:#fff"></div>
<div class="a" style="left:1552px;top:603px;width:1px;height:30px;background:#d4d4d4"></div>
<div class="a" style="left:1551px;top:603px;width:1px;height:30px;background:#fff"></div>
<div class="a" style="left:1553px;top:603px;width:1px;height:30px;background:#fff"></div>
<div class="t" style="left:250px;top:610.0px;color:#333;font-size:13px;">Ордер на приемку</div>
<div class="t" style="left:745px;top:610.0px;color:#333;font-size:13px;">Номер</div>
<div class="t" style="left:862px;top:610.0px;color:#333;font-size:13px;">Дата</div>
<div class="t" style="left:969px;top:610.0px;color:#333;font-size:13px;">Статус</div>
<div class="t" style="left:1213px;top:610.0px;color:#333;font-size:13px;">Отправитель</div>
<div class="t" style="left:1561px;top:610.0px;color:#333;font-size:13px;">Комментарий</div>
<div class="a" style="left:242px;top:634px;width:1658px;height:28px;background:#f9f9f9"></div>
<div class="a" style="left:242px;top:662px;width:1658px;height:1px;background:#ebebeb"></div>
<svg class="a" style="left:250px;top:643.0px" width="18" height="14" viewBox="0 0 18 14">
<rect x="1.5" y="0.5" width="12" height="9.2" fill="#fbfbfb" stroke="#8696ab" stroke-width="1"/>
<path d="M4 2.5 H11 M4 4.5 H11 M4 6.5 H11" stroke="#8d9bad" stroke-width="0.9"/>
<path d="M9.6 8.8 L11.5 11.1 L15.6 6.6" fill="none" stroke="#16bf1a" stroke-width="2.1" stroke-linecap="round" stroke-linejoin="round"/>
</svg>
<div class="t" style="left:275px;top:640.5px;color:#333;font-size:13px;">Приходный ордер на товары</div>
<div class="t" style="left:745px;top:640.5px;color:#333;font-size:13px;">ЦБ-00000013</div>
<div class="t" style="left:862px;top:640.5px;color:#333;font-size:13px;">03.09.2021 1...</div>
<div class="t" style="left:969px;top:640.5px;color:#333;font-size:13px;">Принят</div>
<div class="t" style="left:1213px;top:640.5px;color:#333;font-size:13px;">Поставщик товаров, ООО</div>
<div class="a" style="left:242px;top:663px;width:1658px;height:28px;background:#fff"></div>
<div class="a" style="left:242px;top:691px;width:1658px;height:1px;background:#ebebeb"></div>
<svg class="a" style="left:250px;top:672.0px" width="18" height="14" viewBox="0 0 18 14">
<rect x="1.5" y="0.5" width="12" height="9.2" fill="#fbfbfb" stroke="#8696ab" stroke-width="1"/>
<path d="M4 2.5 H11 M4 4.5 H11 M4 6.5 H11" stroke="#8d9bad" stroke-width="0.9"/>
<path d="M9.6 8.8 L11.5 11.1 L15.6 6.6" fill="none" stroke="#16bf1a" stroke-width="2.1" stroke-linecap="round" stroke-linejoin="round"/>
</svg>
<div class="t" style="left:275px;top:669.5px;color:#333;font-size:13px;">Приходный ордер на товары</div>
<div class="t" style="left:745px;top:669.5px;color:#333;font-size:13px;">ЦБ-00000024</div>
<div class="t" style="left:862px;top:669.5px;color:#333;font-size:13px;">27.06.2022 1...</div>
<div class="t" style="left:969px;top:669.5px;color:#333;font-size:13px;">Принят</div>
<div class="t" style="left:1213px;top:669.5px;color:#333;font-size:13px;">Поставщик товаров, ООО</div>
<div class="a" style="left:242px;top:692px;width:1658px;height:28px;background:#f9f9f9"></div>
<div class="a" style="left:242px;top:720px;width:1658px;height:1px;background:#ebebeb"></div>
<svg class="a" style="left:250px;top:701.0px" width="18" height="14" viewBox="0 0 18 14">
<rect x="1.5" y="0.5" width="12" height="9.2" fill="#fbfbfb" stroke="#8696ab" stroke-width="1"/>
<path d="M4 2.5 H11 M4 4.5 H11 M4 6.5 H11" stroke="#8d9bad" stroke-width="0.9"/>
<path d="M9.6 8.8 L11.5 11.1 L15.6 6.6" fill="none" stroke="#16bf1a" stroke-width="2.1" stroke-linecap="round" stroke-linejoin="round"/>
</svg>
<div class="t" style="left:275px;top:698.5px;color:#333;font-size:13px;">Приходный ордер на товары</div>
<div class="t" style="left:745px;top:698.5px;color:#333;font-size:13px;">ЦБ-00000025</div>
<div class="t" style="left:862px;top:698.5px;color:#333;font-size:13px;">27.06.2022 1...</div>
<div class="t" style="left:969px;top:698.5px;color:#333;font-size:13px;">Принят</div>
<div class="t" style="left:1213px;top:698.5px;color:#333;font-size:13px;">Поставщик товаров, ООО</div>
<div class="a" style="left:242px;top:721px;width:1658px;height:28px;background:#fff"></div>
<div class="a" style="left:242px;top:749px;width:1658px;height:1px;background:#ebebeb"></div>
<svg class="a" style="left:250px;top:730.0px" width="18" height="14" viewBox="0 0 18 14">
<rect x="1.5" y="0.5" width="12" height="9.2" fill="#fbfbfb" stroke="#8696ab" stroke-width="1"/>
<path d="M4 2.5 H11 M4 4.5 H11 M4 6.5 H11" stroke="#8d9bad" stroke-width="0.9"/>
<path d="M9.6 8.8 L11.5 11.1 L15.6 6.6" fill="none" stroke="#16bf1a" stroke-width="2.1" stroke-linecap="round" stroke-linejoin="round"/>
</svg>
<div class="t" style="left:275px;top:727.5px;color:#333;font-size:13px;">Приходный ордер на товары</div>
<div class="t" style="left:745px;top:727.5px;color:#333;font-size:13px;">ЦБ-00000026</div>
<div class="t" style="left:862px;top:727.5px;color:#333;font-size:13px;">11.07.2022 1...</div>
<div class="t" style="left:969px;top:727.5px;color:#333;font-size:13px;">Принят</div>
<div class="t" style="left:1213px;top:727.5px;color:#333;font-size:13px;">Поставщик товаров, ООО</div>
<div class="a" style="left:242px;top:750px;width:1658px;height:28px;background:#f9f9f9"></div>
<div class="a" style="left:242px;top:778px;width:1658px;height:1px;background:#ebebeb"></div>
<svg class="a" style="left:250px;top:759.0px" width="18" height="14" viewBox="0 0 18 14">
<rect x="1.5" y="0.5" width="12" height="9.2" fill="#fbfbfb" stroke="#8696ab" stroke-width="1"/>
<path d="M4 2.5 H11 M4 4.5 H11 M4 6.5 H11" stroke="#8d9bad" stroke-width="0.9"/>
<path d="M9.6 8.8 L11.5 11.1 L15.6 6.6" fill="none" stroke="#16bf1a" stroke-width="2.1" stroke-linecap="round" stroke-linejoin="round"/>
</svg>
<div class="t" style="left:275px;top:756.5px;color:#333;font-size:13px;">Приходный ордер на товары</div>
<div class="t" style="left:745px;top:756.5px;color:#333;font-size:13px;">ЦБ-00000027</div>
<div class="t" style="left:862px;top:756.5px;color:#333;font-size:13px;">18.07.2022 1...</div>
<div class="t" style="left:969px;top:756.5px;color:#333;font-size:13px;">Принят</div>
<div class="t" style="left:1213px;top:756.5px;color:#333;font-size:13px;">Поставщик товаров, ООО</div>
<div class="a" style="left:242px;top:779px;width:1658px;height:28px;background:#fff"></div>
<div class="a" style="left:242px;top:807px;width:1658px;height:1px;background:#ebebeb"></div>
<svg class="a" style="left:250px;top:788.0px" width="18" height="14" viewBox="0 0 18 14">
<rect x="1.5" y="0.5" width="12" height="9.2" fill="#fbfbfb" stroke="#8696ab" stroke-width="1"/>
<path d="M4 2.5 H11 M4 4.5 H11 M4 6.5 H11" stroke="#8d9bad" stroke-width="0.9"/>
<path d="M9.6 8.8 L11.5 11.1 L15.6 6.6" fill="none" stroke="#16bf1a" stroke-width="2.1" stroke-linecap="round" stroke-linejoin="round"/>
</svg>
<div class="t" style="left:275px;top:785.5px;color:#333;font-size:13px;">Приходный ордер на товары</div>
<div class="t" style="left:745px;top:785.5px;color:#333;font-size:13px;">ЦБ-00000037</div>
<div class="t" style="left:862px;top:785.5px;color:#333;font-size:13px;">27.07.2022 1...</div>
<div class="t" style="left:969px;top:785.5px;color:#333;font-size:13px;">Принят</div>
<div class="t" style="left:1213px;top:785.5px;color:#333;font-size:13px;">Поставщик товаров, ООО</div>
<div class="a" style="left:242px;top:808px;width:1658px;height:28px;background:#f9f9f9"></div>
<div class="a" style="left:242px;top:836px;width:1658px;height:1px;background:#ebebeb"></div>
<svg class="a" style="left:250px;top:817.0px" width="18" height="14" viewBox="0 0 18 14">
<rect x="1.5" y="0.5" width="12" height="9.2" fill="#fbfbfb" stroke="#8696ab" stroke-width="1"/>
<path d="M4 2.5 H11 M4 4.5 H11 M4 6.5 H11" stroke="#8d9bad" stroke-width="0.9"/>
<path d="M9.6 8.8 L11.5 11.1 L15.6 6.6" fill="none" stroke="#16bf1a" stroke-width="2.1" stroke-linecap="round" stroke-linejoin="round"/>
</svg>
<div class="t" style="left:275px;top:814.5px;color:#333;font-size:13px;">Приходный ордер на товары</div>
<div class="t" style="left:745px;top:814.5px;color:#333;font-size:13px;">ЦБ-00000038</div>
<div class="t" style="left:862px;top:814.5px;color:#333;font-size:13px;">27.07.2022 1...</div>
<div class="t" style="left:969px;top:814.5px;color:#333;font-size:13px;">Принят</div>
<div class="t" style="left:1213px;top:814.5px;color:#333;font-size:13px;">Савенков Артём Андриянович ИП</div>
<div class="a" style="left:242px;top:837px;width:1658px;height:28px;background:#fff"></div>
<div class="a" style="left:242px;top:865px;width:1658px;height:1px;background:#ebebeb"></div>
<svg class="a" style="left:250px;top:846.0px" width="18" height="14" viewBox="0 0 18 14">
<rect x="1.5" y="0.5" width="12" height="9.2" fill="#fbfbfb" stroke="#8696ab" stroke-width="1"/>
<path d="M4 2.5 H11 M4 4.5 H11 M4 6.5 H11" stroke="#8d9bad" stroke-width="0.9"/>
<path d="M9.6 8.8 L11.5 11.1 L15.6 6.6" fill="none" stroke="#16bf1a" stroke-width="2.1" stroke-linecap="round" stroke-linejoin="round"/>
</svg>
<div class="t" style="left:275px;top:843.5px;color:#333;font-size:13px;">Приходный ордер на товары</div>
<div class="t" style="left:745px;top:843.5px;color:#333;font-size:13px;">ЦБ-00000043</div>
<div class="t" style="left:862px;top:843.5px;color:#333;font-size:13px;">29.07.2022 1...</div>
<div class="t" style="left:969px;top:843.5px;color:#333;font-size:13px;">Принят</div>
<div class="t" style="left:1213px;top:843.5px;color:#333;font-size:13px;">Савенков Артём Андриянович ИП</div>
<div class="a" style="left:242px;top:866px;width:1658px;height:28px;background:#f9f9f9"></div>
<div class="a" style="left:242px;top:894px;width:1658px;height:1px;background:#ebebeb"></div>
<svg class="a" style="left:250px;top:875.0px" width="18" height="14" viewBox="0 0 18 14">
<rect x="1.5" y="0.5" width="12" height="9.2" fill="#fbfbfb" stroke="#8696ab" stroke-width="1"/>
<path d="M4 2.5 H11 M4 4.5 H11 M4 6.5 H11" stroke="#8d9bad" stroke-width="0.9"/>
<path d="M9.6 8.8 L11.5 11.1 L15.6 6.6" fill="none" stroke="#16bf1a" stroke-width="2.1" stroke-linecap="round" stroke-linejoin="round"/>
</svg>
<div class="t" style="left:275px;top:872.5px;color:#333;font-size:13px;">Приходный ордер на товары</div>
<div class="t" style="left:745px;top:872.5px;color:#333;font-size:13px;">ЦБ-00000044</div>
<div class="t" style="left:862px;top:872.5px;color:#333;font-size:13px;">29.07.2022 1...</div>
<div class="t" style="left:969px;top:872.5px;color:#333;font-size:13px;">Принят</div>
<div class="t" style="left:1213px;top:872.5px;color:#333;font-size:13px;">Савенков Артём Андриянович ИП</div>
<div class="a" style="left:242px;top:895px;width:1658px;height:28px;background:#fdf1c5"></div>
<div class="a" style="left:242px;top:923px;width:1658px;height:1px;background:#ebebeb"></div>
<div class="a" style="left:242px;top:922px;width:1658px;height:1px;background:#fff"></div>
<div class="a" style="left:242px;top:895px;width:1658px;height:1px;background:#fff"></div>
<div class="a" style="left:736px;top:895px;width:1px;height:28px;background:#fff"></div>
<div class="a" style="left:853px;top:895px;width:1px;height:28px;background:#fff"></div>
<div class="a" style="left:960px;top:895px;width:1px;height:28px;background:#fff"></div>
<div class="a" style="left:1204px;top:895px;width:1px;height:28px;background:#fff"></div>
<div class="a" style="left:1552px;top:895px;width:1px;height:28px;background:#fff"></div>
<div class="a" style="left:854px;top:895px;width:106px;height:28px;background:#fce497;border:2px solid #f4c51c"></div>
<svg class="a" style="left:250px;top:904.0px" width="18" height="14" viewBox="0 0 18 14">
<rect x="1.5" y="0.5" width="12" height="9.2" fill="#fbfbfb" stroke="#8696ab" stroke-width="1"/>
<path d="M4 2.5 H11 M4 4.5 H11 M4 6.5 H11" stroke="#8d9bad" stroke-width="0.9"/>
<path d="M9.6 8.8 L11.5 11.1 L15.6 6.6" fill="none" stroke="#16bf1a" stroke-width="2.1" stroke-linecap="round" stroke-linejoin="round"/>
</svg>
<div class="t" style="left:275px;top:901.5px;color:#333;font-size:13px;">Приходный ордер на товары</div>
<div class="t" style="left:745px;top:901.5px;color:#333;font-size:13px;">ЦБ-00000045</div>
<div class="t" style="left:862px;top:901.5px;color:#333;font-size:13px;">30.07.2022 1...</div>
<div class="t" style="left:969px;top:901.5px;color:#333;font-size:13px;">Принят</div>
<div class="t" style="left:1213px;top:901.5px;color:#333;font-size:13px;">Вайлдберриз, ООО</div>
<svg class="a" style="left:938px;top:610px" width="9" height="14" viewBox="0 0 9 14"><path d="M4.5 1 V12" stroke="#333" stroke-width="1.2"/><path d="M1.5 8.5 L4.5 12.5 L7.5 8.5 Z" fill="#333"/></svg>
</div>
<div id="extra">
<div class="a" style="left:1804px;top:1006px;width:97px;height:22px;background:#fff;border:1px solid #a6a6a6"></div>
<div class="a" style="left:1828px;top:1006px;width:1px;height:22px;background:#a6a6a6"></div>
<div class="a" style="left:1852px;top:1006px;width:1px;height:22px;background:#a6a6a6"></div>
<div class="a" style="left:1876px;top:1006px;width:1px;height:22px;background:#a6a6a6"></div>
<svg class="a" style="left:1804px;top:1006px" width="97" height="22" viewBox="0 0 97 22">
<g fill="#a9a9a9">
<rect x="7.5" y="8.5" width="9" height="1"/><path d="M7.5 14.5 L12 10 L16.5 14.5 Z"/>
<path d="M31.5 14 L36 9.5 L40.5 14 Z"/>
<path d="M55.5 9.5 L60 14 L64.5 9.5 Z"/>
<path d="M79.5 9.5 L84 14 L88.5 9.5 Z"/><rect x="79.5" y="15" width="9" height="1"/>
</g></svg>
<div class="a" style="left:1664px;top:955px;width:254px;height:84px;border:2px solid rgba(250,220,120,0.28);background:rgba(255,255,255,0.0)"></div>
<div class="a" style="left:1678px;top:968px;width:32px;height:32px;border-radius:50%;background:rgba(250,200,120,0.12)"></div>
<div class="t" style="left:1689px;top:976px;font:italic bold 17px/17px 'Liberation Serif',serif;color:rgba(255,255,255,0.9)">i</div>
<div class="t" style="left:1722px;top:968px;font-size:14.5px;line-height:18px;color:rgba(150,150,150,0.2)">Создание:</div>
<div class="t" style="left:1722px;top:992px;font-size:13px;line-height:17px;color:rgba(40,90,200,0.13)">Приходный ордер на<br>товары ЦБ-00000045 о...</div>
<svg class="a" style="left:1889px;top:971px" width="12" height="12" viewBox="0 0 12 12"><path d="M1 1 L11 11 M11 1 L1 11" stroke="rgba(150,150,150,0.25)" stroke-width="1"/></svg>
<div class="a" style="left:238px;top:893px;width:1122px;height:41px;border:4px solid #fe4040"></div>
<svg class="a" style="left:1090px;top:755px" width="70" height="130" viewBox="0 0 70 130">
<path d="M55.6 13.8 L27 90" stroke="#fe4040" stroke-width="10.5" stroke-linecap="round"/>
<path d="M12.5 88.1 L40 98.1 L16.25 120.6 Z" fill="#fe4040"/></svg>
</div>
</body></html>
